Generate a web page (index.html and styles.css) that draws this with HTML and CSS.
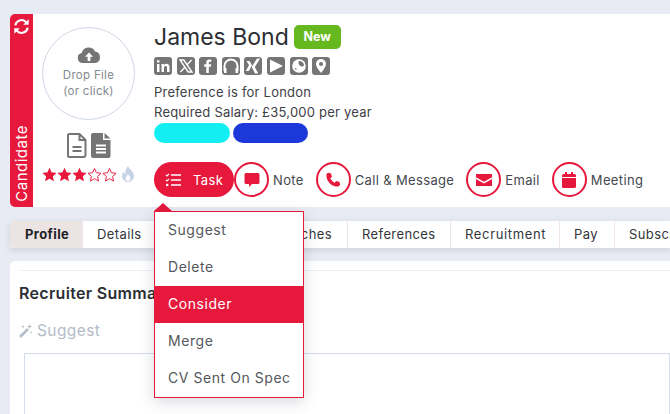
FILE: index.html
```html
<!DOCTYPE html>
<html>
<head>
<meta charset="UTF-8">
<link rel="stylesheet" href="styles.css">
</head>
<body>
<div class="card top">
	<div class="stripe">
		<svg class="sync" viewBox="0 0 16 16" width="17" height="17"><path d="M2.200 7a5.800 5.800 0 0 1 9.900-3.300L13.600 5M13.800 9a5.800 5.800 0 0 1-9.900 3.300L2.400 11" fill="none" stroke="#fff" stroke-width="2"/><path d="M14.800 1.200v5.200H9.600zM1.200 14.800V9.600h5.200z" fill="#fff"/></svg>
		<span class="stripe_text">Candidate</span>
	</div>
	<div class="side">
		<div class="drop">
			<svg viewBox="0 0 24 18" width="24" height="18"><path d="M6 17a5 5 0 0 1-1.200-9.900A7 7 0 0 1 18 5.600 5.800 5.800 0 0 1 18.500 17z" fill="#757575"/><path d="M12 6.500l4 4.300h-2.600V15h-2.800v-4.200H8z" fill="#fff"/></svg>
			<div>Drop File</div>
			<div>(or click)</div>
		</div>
		<div class="docs">
			<svg viewBox="0 0 20 25" width="20" height="25"><path d="M2.500 1h10l6 6v15a2 2 0 0 1-2 2h-14a1.500 1.500 0 0 1-1.500-2V3a1.500 1.500 0 0 1 1.500-2z" fill="#fff" stroke="#757575" stroke-width="2"/><path d="M12.500 1v6h6M5.500 14h9M5.500 18h9" fill="none" stroke="#757575" stroke-width="2"/></svg>
			<svg viewBox="0 0 20 25" width="20" height="25"><path d="M2 0h10v7h7.500v16a2 2 0 0 1-2 2H2a2 2 0 0 1-2-2V2a2 2 0 0 1 2-2zM13.500 0l6 5.500h-6z" fill="#757575"/><path d="M5 12.500h10M5 16h10M5 19.500h10" fill="none" stroke="#fff" stroke-width="1.800"/></svg>
		</div>
		<div class="stars">
			<svg class="star" viewBox="0 0 16 16" width="15" height="15"><path d="M8 .8l2.200 4.900 5.300.6-3.900 3.600 1.100 5.300L8 12.500l-4.700 2.700 1.100-5.300L.5 6.300l5.300-.6z" fill="#e6193c"/></svg>
			<svg class="star" viewBox="0 0 16 16" width="15" height="15"><path d="M8 .8l2.200 4.900 5.300.6-3.900 3.600 1.100 5.300L8 12.500l-4.700 2.700 1.100-5.300L.5 6.300l5.300-.6z" fill="#e6193c"/></svg>
			<svg class="star" viewBox="0 0 16 16" width="15" height="15"><path d="M8 .8l2.200 4.900 5.300.6-3.900 3.600 1.100 5.300L8 12.500l-4.700 2.700 1.100-5.300L.5 6.300l5.300-.6z" fill="#e6193c"/></svg>
			<svg class="star" viewBox="0 0 16 16" width="15" height="15"><path d="M8 1.500l2 4.600 5 .6-3.700 3.300 1 5L8 12.400 3.700 15l1-5L1 6.700l5-.6z" fill="#fff" stroke="#e6193c"/></svg>
			<svg class="star" viewBox="0 0 16 16" width="15" height="15"><path d="M8 1.500l2 4.600 5 .6-3.700 3.300 1 5L8 12.400 3.700 15l1-5L1 6.700l5-.6z" fill="#fff" stroke="#e6193c"/></svg>
			<svg class="flame" viewBox="0 0 14 16" width="14" height="16"><path d="M7 0c1 3 6 5.500 6 10a6 6 0 0 1-12 0c0-2 1-3.500 2-4.500 0 1.500.5 2.500 1.500 3C4 5 5 2.500 7 0z" fill="#c5d2e6"/><path d="M7 8c.5 1.500 2.500 2.500 2.500 4.500a2.500 2.500 0 0 1-5 0C4.500 11 6 10 7 8z" fill="#fff"/></svg>
		</div>
	</div>
	<div class="main">
		<div class="name_row">
			<h1>James Bond</h1>
			<span class="badge">New</span>
		</div>
		<div class="socials">
			<span class="social"><svg viewBox="0 0 18 18"><path d="M3 7h2.500v8H3zM3 3.200h2.500v2.400H3zM7.500 7H10v1.200c.6-.9 1.500-1.400 2.600-1.400 2 0 2.900 1.300 2.900 3.400V15H13v-4.300c0-1.200-.4-1.800-1.300-1.800-1 0-1.700.7-1.700 1.900V15H7.500z" fill="#fff"/></svg></span>
			<span class="social"><svg viewBox="0 0 18 18"><path d="M3 3h3.800l8.200 12h-3.800zM14.500 3l-4.800 5.300M3.500 15l4.900-5.400" fill="none" stroke="#fff" stroke-width="1.400"/></svg></span>
			<span class="social"><svg viewBox="0 0 18 18"><path d="M7.300 16V9.800H5.200V7.300h2.100V5.600c0-2.100 1.200-3.200 3.100-3.200h1.900v2.400h-1.200c-1 0-1.300.5-1.300 1.200v1.300h2.400l-.4 2.500h-2V16z" fill="#fff"/></svg></span>
			<span class="social"><svg viewBox="0 0 18 18"><path d="M2.500 14V9a6.500 6.500 0 0 1 13 0v5" fill="none" stroke="#fff" stroke-width="2"/><path d="M2 11h2.500v5H2zM13.500 11H16v5h-2.500z" fill="#fff"/></svg></span>
			<span class="social"><svg viewBox="0 0 18 18"><path d="M2.500 4h3l2.500 4.300L4.800 14h-3l3.200-5.700zM13 1.500h3.200L10.800 10l3.400 6.500h-3.200L7.700 10z" fill="#fff"/></svg></span>
			<span class="social"><svg viewBox="0 0 18 18"><path d="M3 2.500L16 9 3 15.500z" fill="#fff"/></svg></span>
			<span class="social"><svg viewBox="0 0 18 18"><circle cx="9" cy="9" r="6.800" fill="#fff"/><path d="M9 4c3 0 5 2 5 4.500-1.500 1.500-3.500 1-4.500-.2C8.500 7 8.300 5.500 9 4zM7 12.500c-1.200.3-2 0-2.500-.8.800-.7 2-.7 2.500.8z" fill="#757575"/></svg></span>
			<span class="social"><svg viewBox="0 0 18 18"><path d="M9 2a5 5 0 0 1 5 5c0 3.300-5 9-5 9S4 10.300 4 7a5 5 0 0 1 5-5z" fill="#fff"/><circle cx="9" cy="7" r="2" fill="#757575"/></svg></span>
		</div>
		<p class="info first">Preference is for London</p>
		<p class="info">Required Salary: £35,000 per year</p>
		<div class="pills">
			<span class="pill cyan"></span>
			<span class="pill navy"></span>
		</div>
		<div class="actions">
			<div class="task_wrap">
				<div class="task">
					<svg viewBox="0 0 16 14" width="16" height="14"><path d="M1 2l1 1 2-2.200M1 7l1 1 2-2.200" fill="none" stroke="#fff" stroke-width="1.200"/><circle cx="2.200" cy="12" r="1.300" fill="#fff"/><path d="M6 2h10M6 7h10M6 12h10" stroke="#fff" stroke-width="1.500"/></svg>
					<span>Task</span>
				</div>
				<div class="arrow"></div>
				<div class="menu">
					<div class="menu_item">Suggest</div>
					<div class="menu_item">Delete</div>
					<div class="menu_item active">Consider</div>
					<div class="menu_item">Merge</div>
					<div class="menu_item">CV Sent On Spec</div>
				</div>
			</div>
			<div class="action">
				<span class="ring"><svg viewBox="0 0 16 16" width="16" height="16"><path d="M2 1h12a1.500 1.500 0 0 1 1.500 1.500v8A1.500 1.500 0 0 1 14 12H8l-3 3v-3H2a1.500 1.500 0 0 1-1.500-1.500v-8A1.500 1.500 0 0 1 2 1z" fill="#e6193c"/></svg></span>
				<span>Note</span>
			</div>
			<div class="action">
				<span class="ring"><svg viewBox="0 0 16 16" width="16" height="16"><path d="M3.500 .8l2.400 .6 1.200 3.200L5.300 6.200c.8 1.900 2.400 3.500 4.400 4.500l1.600-1.800 3.200 1.200.6 2.500c-.2 1.200-1.200 2-2.400 2C6.500 14.600 1.400 9.400 1.400 3.200c0-1.200.9-2.200 2.100-2.400z" fill="#e6193c"/></svg></span>
				<span>Call &amp; Message</span>
			</div>
			<div class="action">
				<span class="ring"><svg viewBox="0 0 16 12" width="16" height="12"><path d="M0 0h16v3.200L8 7.800 0 3.200zM0 5l8 4.600L16 5v7H0z" fill="#e6193c"/></svg></span>
				<span>Email</span>
			</div>
			<div class="action">
				<span class="ring"><svg viewBox="0 0 14 16" width="14" height="16"><path d="M3 0h2v2h4V0h2v2h1.500A1.500 1.500 0 0 1 14 3.500V5H0V3.500A1.500 1.500 0 0 1 1.500 2H3zM0 6h14v8.500a1.500 1.500 0 0 1-1.500 1.500h-11A1.500 1.500 0 0 1 0 14.500z" fill="#e6193c"/></svg></span>
				<span>Meeting</span>
			</div>
		</div>
	</div>
</div>
<div class="tabs">
	<div class="tab selected">Profile</div>
	<div class="tab details">Details</div>
	<div class="tab searches">Searches</div>
	<div class="tab references">References</div>
	<div class="tab recruitment">Recruitment</div>
	<div class="tab pay">Pay</div>
	<div class="tab subs">Subscr</div>
</div>
<div class="card summary">
	<hr>
	<h2>Recruiter Summary</h2>
	<div class="suggest">
		<svg viewBox="0 0 14 14" width="14" height="14"><path d="M1 13L9 5" stroke="#b4bcc8" stroke-width="2.600"/><path d="M10.500 0l.7 1.800L13 2.500l-1.800.7-.7 1.800-.7-1.800L8 2.500l1.800-.7zM4 1l.5 1.200 1.200.5-1.200.5L4 4.400l-.5-1.200-1.200-.5 1.200-.5zM12 7l.4 1 1 .4-1 .4-.4 1-.4-1-1-.4 1-.4z" fill="#b4bcc8"/></svg>
		<span>Suggest</span>
	</div>
	<div class="textbox"></div>
</div>
</body>
</html>
```

FILE: styles.css
```css
* {
	padding: 0;
	margin: 0;
	box-sizing: border-box;
	font-family: 'Inter', 'Noto Sans', sans-serif;
}
html, body {
	height: 414px;
	overflow: hidden;
}
body {
	background-color: #e8ebf3;
	padding: 14px 0 0 10px;
	color: #33363b;
}
.card {
	background-color: #fff;
	display: flex;
}
.top {
	height: 193px;
	width: 660px;
	border-radius: 5px 0 0 5px;
}

.stripe {
	width: 23px;
	background-color: #e6193c;
	border-radius: 5px 0 0 5px;
	display: flex;
	flex-direction: column;
	align-items: center;
	justify-content: space-between;
	padding: 4px 0 5px;
	color: #fff;
}
.stripe_text {
	writing-mode: vertical-rl;
	transform: rotate(180deg);
	font-size: 15px;
	letter-spacing: 0.5px;
}

.side {
	width: 121px;
	display: flex;
	flex-direction: column;
	align-items: center;
	padding-top: 13px;
	padding-right: 10px;
	flex-shrink: 0;
}
.drop {
	width: 93px;
	height: 93px;
	flex-shrink: 0;
	border: 1px solid #cfd8e6;
	border-radius: 50%;
	text-align: center;
	color: #858a90;
	font-size: 11.5px;
	letter-spacing: 0.3px;
	line-height: 16px;
	padding-top: 18px;
}
.drop svg {
	display: block;
	margin: 0 auto 3px;
}
.docs {
	display: flex;
	gap: 4px;
	margin-top: 13px;
}
.stars {
	display: flex;
	align-items: center;
	margin-top: 8px;
}
.star {
	flex-shrink: 0;
}
.flame {
	margin-left: 4px;
	flex-shrink: 0;
}

.main {
	flex: 1;
	padding-top: 10px;
}
.name_row {
	display: flex;
	align-items: center;
	height: 26px;
	gap: 5px;
}
h1 {
	font-weight: 400;
	font-size: 23px;
	color: #2b2e33;
}
.badge {
	background-color: #65b91e;
	color: #fff;
	font-size: 12.5px;
	font-weight: 700;
	border-radius: 5px;
	width: 47px;
	height: 24px;
	line-height: 24px;
	text-align: center;
}
.socials {
	display: flex;
	gap: 4.6px;
	margin-top: 7px;
}
.social {
	width: 18px;
	height: 18px;
	background-color: #757575;
	border-radius: 3px;
	display: block;
}
.social svg {
	display: block;
}
.info {
	font-size: 13px;
	letter-spacing: 0.22px;
	line-height: 20px;
	color: #3d4046;
}
.first {
	margin-top: 7px;
}
.pills {
	display: flex;
	gap: 3px;
	margin-top: 1px;
}
.pill {
	width: 76px;
	height: 20px;
	border-radius: 10px;
}
.cyan {
	background-color: #12eef2;
}
.navy {
	width: 75px;
	background-color: #1c38d8;
}

.actions {
	display: flex;
	margin-top: 19px;
	font-size: 13px;
	letter-spacing: 0.35px;
	color: #44484e;
}
.task_wrap {
	position: relative;
}
.task {
	width: 80px;
	height: 35px;
	border-radius: 18px;
	background-color: #e6193c;
	color: #fff;
	display: flex;
	align-items: center;
	padding-left: 11px;
	gap: 12px;
}
.action {
	display: flex;
	align-items: center;
	gap: 4px;
	margin-right: 12px;
}
.ring {
	width: 35px;
	height: 35px;
	border: 2px solid #e6193c;
	border-radius: 50%;
	display: flex;
	align-items: center;
	justify-content: center;
}

.arrow {
	position: absolute;
	left: 0;
	top: 41px;
	width: 0;
	height: 0;
	border-left: 9px solid transparent;
	border-right: 9px solid transparent;
	border-bottom: 8px solid #e6193c;
}
.menu {
	position: absolute;
	left: 0;
	top: 49px;
	width: 150px;
	height: 187px;
	background-color: #fff;
	border: 1px solid #e6193c;
	box-shadow: 0 4px 14px rgba(60, 70, 90, 0.2);
	z-index: 5;
}
.menu_item {
	height: 37px;
	line-height: 35px;
	padding-left: 13px;
	font-size: 14px;
	letter-spacing: 0.55px;
	color: #55585c;
}
.menu_item.active {
	background-color: #e6193c;
	color: #fff;
}

.tabs {
	display: flex;
	margin-top: 14px;
	height: 27px;
	width: 660px;
	overflow: hidden;
	box-shadow: 0 2px 6px rgba(60, 70, 90, 0.15);
	font-size: 13px;
	letter-spacing: 0.4px;
	color: #33363b;
}
.tab {
	background-color: #fff;
	line-height: 27px;
	padding-left: 14px;
	border-right: 1px solid #f0e4e4;
	flex-shrink: 0;
	white-space: nowrap;
}
.tab.selected {
	background-color: #ece3e3;
	font-weight: 700;
	width: 73px;
	padding-left: 15px;
	border-radius: 5px 0 0 5px;
	color: #1f2125;
}
.details {
	width: 72px;
}
.searches {
	width: 193px;
	text-align: right;
	padding-right: 15px;
}
.references {
	width: 103px;
}
.recruitment {
	width: 109px;
	letter-spacing: 0.65px;
}
.pay {
	width: 55px;
}
.subs {
	flex: 1;
	border-right: 0;
}

.summary {
	display: block;
	margin-top: 13px;
	width: 660px;
	height: 153px;
	border-radius: 5px 0 0 0;
	padding: 9px 0 0 9px;
}
hr {
	border: 0;
	border-top: 1px solid #eceff5;
}
h2 {
	font-size: 16px;
	font-weight: 600;
	line-height: 20px;
	margin-top: 12px;
	letter-spacing: 0.3px;
	color: #2b2e33;
}
.suggest {
	display: flex;
	align-items: center;
	gap: 4px;
	margin-top: 18px;
	color: #b4bcc8;
	font-size: 15.5px;
	letter-spacing: 0.4px;
	line-height: 20px;
}
.textbox {
	margin: 12px 0 0 5px;
	height: 61px;
	border: 1px solid #d5dcea;
	border-bottom: 0;
}
```
